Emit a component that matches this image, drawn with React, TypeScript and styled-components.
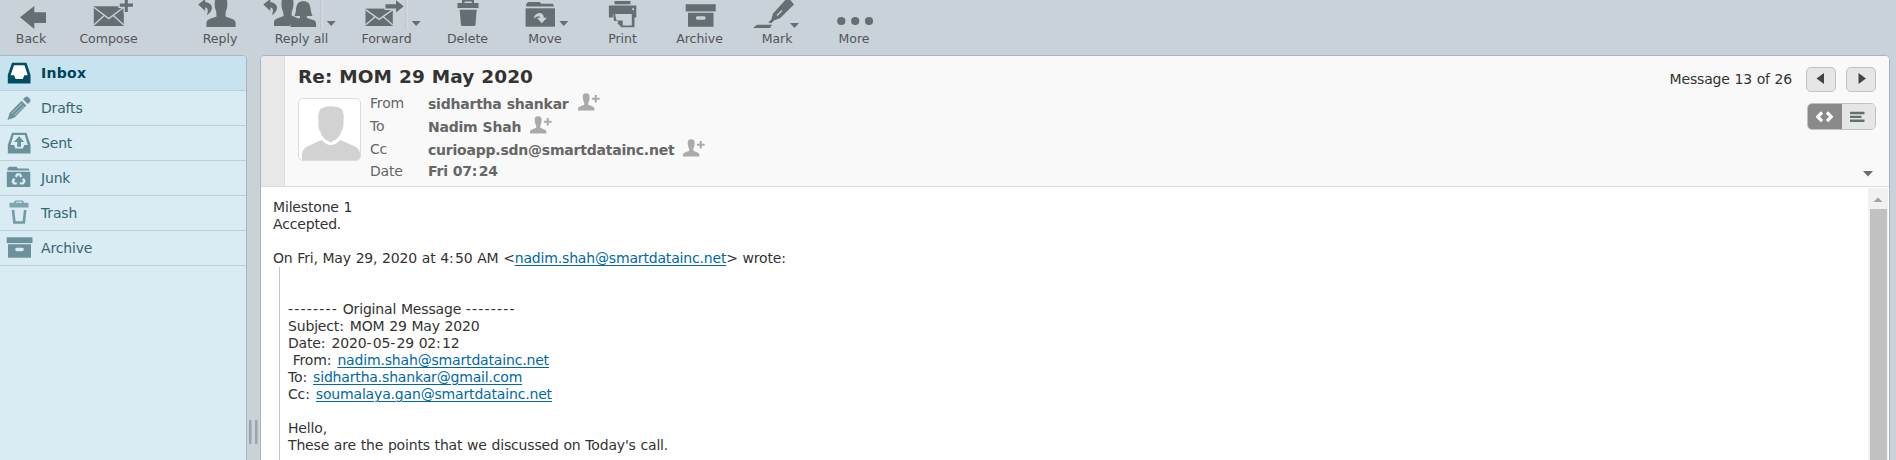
import React from "react";
import styled, { createGlobalStyle, css } from "styled-components";

const INK = "#656e71";
const BAR = "#c9d1d9";

const GlobalStyle = createGlobalStyle`
  *, *::before, *::after { box-sizing: border-box; }
  html, body { margin: 0; height: 100%; overflow: hidden; background: ${BAR}; }
  body {
    font-family: "DejaVu Sans", Verdana, sans-serif;
    font-size: 14px;
    letter-spacing: -0.17px;
    word-spacing: 0.45px;
    color: #333;
  }
`;

const Page = styled.div`
  display: flex;
  flex-direction: column;
  width: 100vw;
  height: 100vh;
  background: ${BAR};
`;

const Toolbar = styled.nav`
  display: flex;
  flex: none;
  height: 55px;
  padding-left: 1px;
`;

const ToolButton = styled.div<{ $gap: number }>`
  flex: none;
  width: 60px;
  margin-left: ${(p) => p.$gap}px;
  display: flex;
  flex-direction: column;
  align-items: center;
  font-size: 12.5px;
  line-height: 18px;
  letter-spacing: -0.02px;
  color: #555;
  white-space: nowrap;
`;

const ToolIcon = styled.svg`
  display: block;
  flex: none;
  width: 60px;
  height: 30px;
  overflow: visible;
  fill: ${INK};
`;

const Workspace = styled.div`
  display: flex;
  flex: 1;
  min-height: 0;
`;

const Sidebar = styled.aside`
  flex: none;
  width: 247px;
  background: #d9ecf4;
  border-top: 1px solid #a9b8c2;
  border-right: 1px solid #a9b4bf;
  border-top-right-radius: 5px;
  overflow: hidden;
`;

const Folder = styled.div<{ $selected?: boolean }>`
  display: flex;
  align-items: center;
  height: 35px;
  padding-left: 6px;
  gap: 9px;
  border-bottom: 1px solid #b8d0d8;
  color: #376572;
  ${(p) =>
    p.$selected &&
    css`
      background: #c7e3ef;
      color: #004458;
      font-weight: bold;
      letter-spacing: 0.3px;
    `}
`;

const FolderIcon = styled.svg`
  flex: none;
  width: 26px;
  height: 26px;
  overflow: visible;
  fill: #6b919b;
`;

const Splitter = styled.div`
  flex: none;
  width: 13px;
  display: flex;
  justify-content: center;
  align-items: flex-end;
  gap: 3px;
  padding-bottom: 16px;
`;

const Grip = styled.i`
  width: 3px;
  height: 24px;
  background: #9ba4ac;
  border-right: 1px solid #b0b8bf;
`;

const Panel = styled.main`
  flex: none;
  width: 1630px;
  display: flex;
  flex-direction: column;
  background: #fff;
  border: 1px solid #a9b4c0;
  border-bottom: 0;
  border-radius: 5px 5px 0 0;
  overflow: hidden;
`;

const Header = styled.header`
  flex: none;
  display: flex;
  height: 131px;
  background: #f9f9f9;
  border-bottom: 1px solid #dbdbdb;
`;

const Stripe = styled.div`
  flex: none;
  width: 24px;
  background: #e8e8e8;
  border-right: 1px solid #dcdcdc;
`;

const Summary = styled.div`
  flex: 1;
  padding: 9px 0 0 13px;
`;

const Title = styled.h1`
  margin: 0;
  font-size: 18.5px;
  line-height: 24px;
  letter-spacing: 0.06px;
  color: #333;
`;

const Contact = styled.div`
  display: flex;
  gap: 9px;
  margin-top: 3px;
`;

const Avatar = styled.svg`
  flex: none;
  width: 63px;
  height: 63px;
  margin-top: 6px;
  border: 1px solid #dcdcdc;
  border-radius: 5px;
  background: #fff;
`;

const Fields = styled.div`
  display: flex;
  flex-direction: column;
`;

const Field = styled.div<{ $h?: number }>`
  display: flex;
  align-items: center;
  height: ${(p) => p.$h ?? 23}px;
  color: #666;
`;

const Label = styled.span`
  width: 58px;
  margin-top: -1px;
  color: #666;
`;

const Value = styled.b`
  letter-spacing: -0.22px;
  color: #666;
`;

const AddIcon = styled.svg`
  width: 22px;
  height: 18px;
  margin: -3px 0 0 9px;
  fill: #aaa;
`;

const Controls = styled.div`
  flex: none;
  width: 220px;
  display: flex;
  flex-direction: column;
  align-items: flex-end;
  padding: 11px 13px 0 0;
`;

const Pager = styled.div`
  display: flex;
  align-items: center;
  height: 25px;
`;

const Count = styled.span`
  margin-right: 14px;
  margin-top: -2px;
  white-space: nowrap;
`;

const PageButton = styled.button<{ $gap?: number }>`
  display: flex;
  width: 30px;
  height: 25px;
  padding: 0;
  margin-left: ${(p) => p.$gap ?? 0}px;
  border: 1px solid #c2c2c2;
  border-radius: 5px;
  background: #e6e6e6;
`;

const Toggle = styled.div`
  display: flex;
  width: 69px;
  height: 27px;
  margin-top: 11px;
  border: 1px solid #c2c2c2;
  border-radius: 5px;
  background: #e6e6e6;
  overflow: hidden;
`;

const ToggleHalf = styled.div<{ $on?: boolean }>`
  width: ${(p) => (p.$on ? 34 : 33)}px;
  background: ${(p) => (p.$on ? "#8a8a8a" : "#e6e6e6")};
`;

const Expand = styled.svg`
  width: 10px;
  height: 7px;
  margin: 40px 3px 0 0;
  fill: #646d70;
`;

const Body = styled.div`
  display: flex;
  flex: 1;
  min-height: 0;
  padding: 1px 1px 0 0;
`;

const Message = styled.article`
  flex: 1;
  padding: 11px 0 0 12px;
  line-height: 17px;
`;

const Line = styled.div`
  height: 17px;
  white-space: pre;
`;

const Mark = styled.span`
  letter-spacing: 1.2px;
`;

const Quote = styled.blockquote`
  margin: 0 0 0 6px;
  padding: 34px 0 60px 8px;
  border-left: 1px solid #c4c4c4;
`;

const Link = styled.a`
  color: #0069a6;
  text-decoration: underline;
  text-decoration-thickness: 1px;
  text-underline-offset: 2px;
`;

const Scrollbar = styled.div`
  flex: none;
  width: 20px;
  display: flex;
  flex-direction: column;
  align-items: center;
  background: #f1f1f1;
`;

const ScrollArrow = styled.svg`
  flex: none;
  width: 20px;
  height: 21px;
  fill: #a3a3a3;
`;

const Thumb = styled.div`
  flex: 1;
  width: 17px;
  background: #c1c1c1;
`;

/* Gives colons and hyphens a little more room than the letters around them. */
const Spaced = ({ children }: { children: string }) => (
  <>
    {children.split(/([:-]+)/).map((part, i) => (i % 2 ? <Mark key={i}>{part}</Mark> : part))}
  </>
);

const Caret = ({ x, y }: { x: number; y: number }) => <path d={`M${x} ${y}h9l-4.5 5z`} />;

const Divider = ({ x }: { x: number }) => (
  <g>
    <rect x={x - 1} y="-1" width="1" height="31" fill="#b9bdc0" />
    <rect x={x} y="-1" width="1" height="31" fill="#dadfe3" />
  </g>
);

const ReplyArrow = ({ x }: { x: number }) => (
  <path
    transform={`translate(${x} 0)`}
    d="M0 4.5L7-1V2.2C11.5 2.2 14.5 5.5 13.6 9C13 11.5 11 13.8 8.5 15.3C10 12 10.5 8 7 7.6V11z"
  />
);

const Man = ({ x }: { x: number }) => (
  <path
    transform={`translate(${x} 0)`}
    d="M-5.8-1H5.8C6.8 4 6.4 8 4.8 11.5L4.4 16.5L12 19.3Q14.6 20.5 14.6 23V27H-14.6V23Q-14.6 20.5-12 19.3L-4.4 16.5L-4.8 11.5C-6.4 8-6.8 4-5.8-1z"
  />
);

const Envelope = ({ x, y, w, h }: { x: number; y: number; w: number; h: number }) => (
  <g>
    <rect x={x} y={y} width={w} height={h} />
    <path
      d={`M${x} ${y + 1}L${x + w / 2} ${y + h * 0.62}L${x + w} ${y + 1}M${x} ${y + h - 1}L${x + w * 0.34} ${y + h * 0.48}M${x + w} ${y + h - 1}L${x + w * 0.66} ${y + h * 0.48}`}
      fill="none"
      stroke={BAR}
      strokeWidth="1.4"
    />
  </g>
);

type Tool = { label: string; left: number; gap: number; art: React.ReactNode };

const tools: Tool[] = [
  { label: "Back", left: 1, gap: 0, art: <path d="M20 17.3L34.3 6V12.3H46V23H34.3V29z" /> },
  {
    label: "Compose",
    left: 78.5,
    gap: 17.5,
    art: (
      <>
        <Envelope x={93.3} y={6.3} w={30} h={19.7} />
        <path d="M117.8 2.3H133V8H128.5V13.2H123V8H117.8z" fill={BAR} />
        <path d="M124.3-1H127.3V3.5H132.5V6.7H127.3V12H124.3V6.7H119.3V3.5H124.3z" />
      </>
    ),
  },
  {
    label: "Reply",
    left: 190,
    gap: 51.5,
    art: (
      <>
        <ReplyArrow x={198.2} />
        <Man x={221} />
      </>
    ),
  },
  {
    label: "Reply all",
    left: 271.5,
    gap: 21.5,
    art: (
      <>
        <ReplyArrow x={262.8} />
        <path d="M281.5-1H292.5C293.5 4 293 8 291.3 11.5L291 15.5L298 18.5L293 20.5Q290.5 22 289.5 26H273.5V22Q273.5 19.8 276 18.8L283.2 16L282.5 11.5C280.8 8 280.5 4 281.5-1z" />
        <path d="M298 2.5C301 .6 306 .8 308 3C310.6 6 309.6 11 312 16H306.3V18L313.5 20.3Q315.6 21.2 315.6 23.5V27H290V23.5Q290 21.2 292.5 20.3L299.5 18V16H294C296.5 11 294.5 6 298 2.5z" />
        <Divider x={321} />
        <Caret x={326.2} y={21} />
      </>
    ),
  },
  {
    label: "Forward",
    left: 356.5,
    gap: 25,
    art: (
      <>
        <Envelope x={365} y={8.6} w={27.3} h={17.4} />
        <path d="M384 2.5H403V10H384z" fill={BAR} />
        <path d="M385 4.3H395.5V.3L403.2 6.3L395.5 12.5V8.6H385z" />
        <Divider x={406} />
        <Caret x={411.2} y={21} />
      </>
    ),
  },
  {
    label: "Delete",
    left: 437.5,
    gap: 21,
    art: (
      <>
        <path d="M461.5 3V0H473.5V3H478V8H457V3zM464 3H471.3V1.6H464z" fillRule="evenodd" />
        <path d="M459.2 9.8H476.2L475 24.5Q474.8 26 473.5 26H462Q460.6 26 460.4 24.5z" />
      </>
    ),
  },
  {
    label: "Move",
    left: 515,
    gap: 17.5,
    art: (
      <>
        <path d="M526 6.5V4.5L528 2H539.5L541.5 3.8H553L554 6.5z" />
        <path d="M525.6 8.3H555V26.7H525.6z" />
        <path d="M533.5 18.8C534.5 14.2 538 12.2 541 13.3C543.3 14.2 543.8 16 543.8 17.8H547L541.7 23.3L537 17.8H540.2C540 15.6 537 15.3 533.5 18.8z" fill={BAR} />
        <Caret x={559.3} y={21} />
      </>
    ),
  },
  {
    label: "Print",
    left: 592.5,
    gap: 17.5,
    art: (
      <>
        <rect x="614" y="1" width="16" height="3.3" />
        <path d="M608.4 5.6H635.8V17.5H632V13H612.4V17.5H608.4z" />
        <path d="M612.6 13H634V27.2H620.8L617.3 23.5V21H613.5z" />
        <path d="M614.6 14H631.3V25.5H622.2V20.5H616z" fill={BAR} />
        <rect x="631.7" y="8.3" width="1.8" height="1.8" fill={BAR} />
      </>
    ),
  },
  {
    label: "Archive",
    left: 669.5,
    gap: 17,
    art: (
      <>
        <rect x="685.2" y="4.2" width="30" height="7.2" />
        <rect x="687.5" y="12.8" width="25.5" height="14" />
        <rect x="695.5" y="16.3" width="9.5" height="3.4" rx="1.4" fill={BAR} />
      </>
    ),
  },
  {
    label: "Mark",
    left: 747,
    gap: 17.5,
    art: (
      <>
        <path d="M757 24.8H772L770 28H753z" />
        <path d="M768.2 22.5L771.3 19.5L773 13.5L786.3-1H789.5L794 4.5L780 18.3L774.3 20.3L771.3 23.3z" />
        <path d="M777 15.5L782 10.5" stroke={BAR} strokeWidth="1.3" />
        <Caret x={790} y={23} />
      </>
    ),
  },
  {
    label: "More",
    left: 824,
    gap: 17,
    art: (
      <>
        <circle cx="841.3" cy="21" r="4.1" />
        <circle cx="855.2" cy="21" r="4.1" />
        <circle cx="869" cy="21" r="4.1" />
      </>
    ),
  },
];

type FolderItem = { name: string; selected?: boolean; art: React.ReactNode };

const folders: FolderItem[] = [
  {
    name: "Inbox",
    selected: true,
    art: (
      <>
        <path d="M6 2.8H20.5L24.5 15V23.5H1.8V15z" fill="#004e63" />
        <path d="M8 5.2H18.5L21.7 15.2H18.3L16.8 19H9.6L8 15.2H4.6z" fill="#fff" />
      </>
    ),
  },
  {
    name: "Drafts",
    art: (
      <>
        <path d="M1.5 25L3.7 17.8L15.6 5.8L20.3 10.4L8.6 22.4z" />
        <path d="M17 4.2L19.3 2Q20.8 .8 22.2 2.2L24 4Q25.2 5.5 24 7L21.7 9z" />
        <path d="M5.8 18.6L16 8.4M8.5 20.3L18 10.7" stroke="#b4ccd4" strokeWidth="1" fill="none" />
      </>
    ),
  },
  {
    name: "Sent",
    art: (
      <>
        <path d="M6 2.8H20.5L24.5 15V23.5H1.8V15z" />
        <path d="M7.6 5H18.8L21.8 15H18.3L17 18.5H9.4L8 15H4.5z" fill="#d9ecf4" />
        <path d="M13.1 6.2L18.2 12H15V16.8H11.2V12H8z" />
      </>
    ),
  },
  {
    name: "Junk",
    art: (
      <>
        <path d="M1.5 5.5V3.5L3 1.8H10.5L12 3.5H22.5L23.5 5.5z" />
        <path d="M.8 6.8H24.3V22H.8z" />
        <path
          d="M9.8 11.8L11.3 9.4H13.8L15.4 12M17 13.6L18.4 16.2L17 18.4H13.8M10.8 18.4H7.8L6.8 16.4L8.3 13.6"
          fill="none"
          stroke="#d9ecf4"
          strokeWidth="2.4"
        />
      </>
    ),
  },
  {
    name: "Trash",
    art: (
      <>
        <path d="M3.5 2.8H8L9 .5H17L18 2.8H22.5V7.5H3.5zM10 2.8H16V1.8H10z" fill="#7fa3ae" />
        <path d="M7 10L8.4 22.5H17.8L19.2 10" fill="none" stroke="#7599a4" strokeWidth="2.6" />
      </>
    ),
  },
  {
    name: "Archive",
    art: (
      <>
        <rect x=".7" y="2.3" width="25.8" height="5.8" />
        <path d="M2 9.3H25V22.7H2z" />
        <rect x="9.3" y="12.7" width="8.4" height="3.5" rx="1.4" fill="#d9ecf4" />
      </>
    ),
  },
];

const AddContact = () => (
  <AddIcon viewBox="0 0 22 18">
    <path d="M5 1.5Q8.2-.8 11.3 1.5Q12.3 6 10.3 10V11.8L15 13.7Q16.4 14.4 16.4 15.8V17.6H0V15.8Q0 14.4 1.4 13.7L6.2 11.8V10Q4 6 5 1.5z" />
    <path d="M16.7 2H18.8V4.8H21.7V6.8H18.8V9.6H16.7V6.8H13.9V4.8H16.7z" />
  </AddIcon>
);

export default function App() {
  return (
    <Page>
      <GlobalStyle />
      <Toolbar>
        {tools.map((t) => (
          <ToolButton key={t.label} $gap={t.gap}>
            <ToolIcon viewBox={`${t.left} 0 60 30`}>{t.art}</ToolIcon>
            {t.label}
          </ToolButton>
        ))}
      </Toolbar>
      <Workspace>
        <Sidebar>
          {folders.map((f) => (
            <Folder key={f.name} $selected={f.selected}>
              <FolderIcon viewBox="0 0 26 26">{f.art}</FolderIcon>
              {f.name}
            </Folder>
          ))}
        </Sidebar>
        <Splitter>
          <Grip />
          <Grip />
        </Splitter>
        <Panel>
          <Header>
            <Stripe />
            <Summary>
              <Title>Re: MOM 29 May 2020</Title>
              <Contact>
                <Avatar viewBox="0 0 61 61">
                  <path
                    fill="#d2d2d2"
                    d="M22 9.5Q32 5 42 9.5Q45.5 13 44.5 23Q45 29 42 33Q41 39 31.5 43.5Q22.5 39 21.5 33Q18.5 29 19.5 22Q18.5 13 22 9.5zM22.5 41Q27 46 31.5 46Q37 46 41.5 41L56 47.5Q61 50 61 55V61H3V56Q3 50 8 47.5z"
                  />
                </Avatar>
                <Fields>
                  <Field>
                    <Label>From</Label>
                    <Value>sidhartha shankar</Value>
                    <AddContact />
                  </Field>
                  <Field>
                    <Label>To</Label>
                    <Value>Nadim Shah</Value>
                    <AddContact />
                  </Field>
                  <Field>
                    <Label>Cc</Label>
                    <Value>curioapp.sdn@smartdatainc.net</Value>
                    <AddContact />
                  </Field>
                  <Field $h={20}>
                    <Label>Date</Label>
                    <Value>
                      <Spaced>Fri 07:24</Spaced>
                    </Value>
                  </Field>
                </Fields>
              </Contact>
            </Summary>
            <Controls>
              <Pager>
                <Count>Message 13 of 26</Count>
                <PageButton aria-label="Previous message">
                  <svg width="28" height="23" fill="#444">
                    <path d="M9.5 10.5L17 5V16z" />
                  </svg>
                </PageButton>
                <PageButton $gap={10} aria-label="Next message">
                  <svg width="28" height="23" fill="#444">
                    <path d="M19 10.5L11.5 5V16z" />
                  </svg>
                </PageButton>
              </Pager>
              <Toggle>
                <ToggleHalf $on>
                  <svg width="34" height="25" fill="none" stroke="#fff" strokeWidth="3.2">
                    <path d="M14 8.4L9.8 12.8L14 17.2M19 8.4L23.2 12.8L19 17.2" />
                  </svg>
                </ToggleHalf>
                <ToggleHalf>
                  <svg width="33" height="25" fill={INK}>
                    <path d="M8 7.8H22.5V10.2H8zM8 11.7H19.5V14H8zM8 15.6H22.5V18H8z" />
                  </svg>
                </ToggleHalf>
              </Toggle>
              <Expand viewBox="0 0 10 7">
                <path d="M0 1H10L5 6.5z" />
              </Expand>
            </Controls>
          </Header>
          <Body>
            <Message>
              <Line>Milestone 1</Line>
              <Line>Accepted.</Line>
              <Line />
              <Line>
                <Spaced>{"On Fri, May 29, 2020 at 4:50 AM <"}</Spaced>
                <Link>nadim.shah@smartdatainc.net</Link>
                <Spaced>{"> wrote:"}</Spaced>
              </Line>
              <Quote>
                <Line>
                  <Spaced>-------- Original Message --------</Spaced>
                </Line>
                <Line>
                  <Spaced>Subject: MOM 29 May 2020</Spaced>
                </Line>
                <Line>
                  <Spaced>Date: 2020-05-29 02:12</Spaced>
                </Line>
                <Line>
                  <Spaced>{" From: "}</Spaced>
                  <Link>nadim.shah@smartdatainc.net</Link>
                </Line>
                <Line>
                  <Spaced>{"To: "}</Spaced>
                  <Link>sidhartha.shankar@gmail.com</Link>
                </Line>
                <Line>
                  <Spaced>{"Cc: "}</Spaced>
                  <Link>soumalaya.gan@smartdatainc.net</Link>
                </Line>
                <Line />
                <Line>Hello,</Line>
                <Line>These are the points that we discussed on Today's call.</Line>
              </Quote>
            </Message>
            <Scrollbar>
              <ScrollArrow>
                <path d="M5.5 14L10 9.5L14.5 14z" />
              </ScrollArrow>
              <Thumb />
            </Scrollbar>
          </Body>
        </Panel>
      </Workspace>
    </Page>
  );
}
